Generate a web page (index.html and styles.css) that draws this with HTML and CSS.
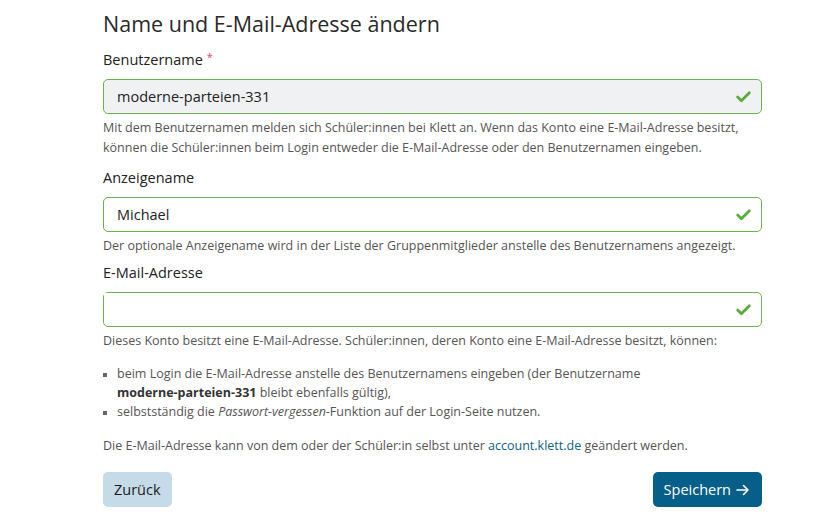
FILE: index.html
```html
<!DOCTYPE html>
<html lang="de">
<head>
  <meta charset="UTF-8">
  <meta name="viewport" content="width=device-width, initial-scale=1.0">
  <title>Name und E-Mail-Adresse ändern</title>
  <link rel="stylesheet" href="styles.css">
</head>
<body>
  <form class="account-form">
    <h1>Name und E-Mail-Adresse ändern</h1>

    <div class="field">
      <label class="field-label" for="username">Benutzername <span class="required">*</span></label>
      <div class="input-wrap">
        <input class="input readonly" id="username" type="text" value="moderne-parteien-331" readonly>
        <svg class="check" viewBox="0 0 16 16" width="17" height="17"><path d="M2.5 8.5l3.5 3.5 7.5-7.5" fill="none" stroke="#5aaa3c" stroke-width="2.6" stroke-linecap="round" stroke-linejoin="round"/></svg>
      </div>
      <p class="hint">Mit dem Benutzernamen melden sich Schüler:innen bei Klett an. Wenn das Konto eine E-Mail-Adresse besitzt, können die Schüler:innen beim Login entweder die E-Mail-Adresse oder den Benutzernamen eingeben.</p>
    </div>

    <div class="field field-tight">
      <label class="field-label" for="displayname">Anzeigename</label>
      <div class="input-wrap">
        <input class="input" id="displayname" type="text" value="Michael">
        <svg class="check" viewBox="0 0 16 16" width="17" height="17"><path d="M2.5 8.5l3.5 3.5 7.5-7.5" fill="none" stroke="#5aaa3c" stroke-width="2.6" stroke-linecap="round" stroke-linejoin="round"/></svg>
      </div>
      <p class="hint">Der optionale Anzeigename wird in der Liste der Gruppenmitglieder anstelle des Benutzernamens angezeigt.</p>
    </div>

    <div class="field">
      <label class="field-label" for="email">E-Mail-Adresse</label>
      <div class="input-wrap">
        <input class="input" id="email" type="text" value="">
        <span class="redacted"></span>
        <svg class="check" viewBox="0 0 16 16" width="17" height="17"><path d="M2.5 8.5l3.5 3.5 7.5-7.5" fill="none" stroke="#5aaa3c" stroke-width="2.6" stroke-linecap="round" stroke-linejoin="round"/></svg>
      </div>
      <p class="hint">Dieses Konto besitzt eine E-Mail-Adresse. Schüler:innen, deren Konto eine E-Mail-Adresse besitzt, können:</p>
      <ul class="hint-list">
        <li>beim Login die E-Mail-Adresse anstelle des Benutzernamens eingeben (der Benutzername <strong>moderne-parteien-331</strong> bleibt ebenfalls gültig),</li>
        <li>selbstständig die <em>Passwort-vergessen</em>-Funktion auf der Login-Seite nutzen.</li>
      </ul>
      <p class="hint">Die E-Mail-Adresse kann von dem oder der Schüler:in selbst unter <a href="#">account.klett.de</a> geändert werden.</p>
    </div>

    <div class="actions">
      <button type="button" class="btn btn-back">Zurück</button>
      <button type="submit" class="btn btn-save">Speichern
        <svg viewBox="0 0 16 16" width="16" height="16"><path d="M2 8h11M8.5 3.5L13 8l-4.5 4.5" fill="none" stroke="#fff" stroke-width="1.6" stroke-linecap="round" stroke-linejoin="round"/></svg>
      </button>
    </div>
  </form>
</body>
</html>
```

FILE: styles.css
```css
body {
  margin: 0;
  font-family: "Open Sans", "Noto Sans", sans-serif;
  background-color: #fff;
  color: #222;
}

.account-form {
  width: 659px;
  margin-left: 103px;
  padding-top: 8px;
}

h1 {
  margin: 0 0 10px;
  font-size: 21.5px;
  font-weight: 400;
  line-height: 32px;
  color: #2a2a2a;
}

.field-label {
  display: block;
  font-size: 14.5px;
  line-height: 20px;
  margin-bottom: 9px;
  color: #222;
}

.required {
  color: #e0475f;
  font-size: 11px;
  vertical-align: top;
  line-height: 14px;
}

.input-wrap {
  position: relative;
}

.input {
  box-sizing: border-box;
  width: 100%;
  height: 35px;
  padding: 0 36px 0 13px;
  border: 1px solid #6cb24e;
  border-radius: 5px;
  background-color: #fff;
  font-family: inherit;
  font-size: 14.5px;
  color: #222;
  outline: none;
}

.input.readonly {
  background-color: #f0f1f3;
}

.check {
  position: absolute;
  right: 10px;
  top: 9px;
}

.redacted {
  position: absolute;
  left: 1px;
  top: 1px;
  width: 150px;
  height: 20px;
  background: #fff;
}

.hint {
  margin: 4px 0 0;
  font-size: 12.5px;
  line-height: 20px;
  color: #555;
}

.field {
  margin-bottom: 10px;
}

.field-tight {
  margin-bottom: 7px;
}

.hint-list {
  max-width: 570px;
  margin: 13px 0 15px;
  padding-left: 14px;
  list-style: none;
  font-size: 12.5px;
  line-height: 19px;
  color: #555;
}

.hint-list li {
  position: relative;
}

.hint-list li::before {
  content: "";
  position: absolute;
  left: -14px;
  top: 9px;
  width: 4px;
  height: 4px;
  background: #666;
}

.hint-list strong {
  color: #333;
}

.hint a {
  color: #0b5f86;
  text-decoration: none;
}

.actions {
  display: flex;
  justify-content: space-between;
  margin-top: 16px;
}

.btn {
  display: flex;
  align-items: center;
  gap: 4px;
  height: 35px;
  padding: 0 11px;
  border: none;
  border-radius: 5px;
  font-family: inherit;
  font-size: 14.5px;
  cursor: pointer;
}

.btn-back {
  background-color: #c5dbe8;
  color: #1a1a1a;
}

.btn-save {
  background-color: #065f88;
  color: #fff;
}
```
